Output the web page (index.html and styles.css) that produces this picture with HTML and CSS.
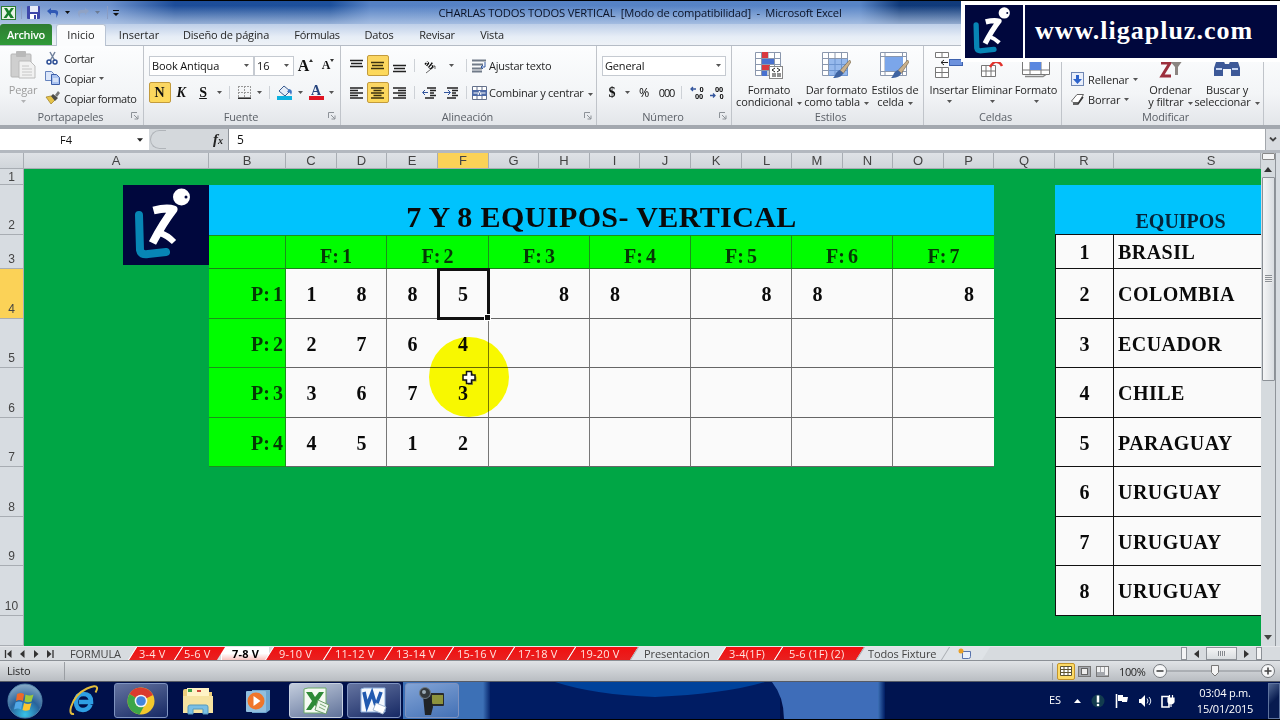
FILE: index.html
```html
<!DOCTYPE html>
<html lang="es">
<head>
    <meta charset="UTF-8">
    <meta name="viewport" content="width=device-width, initial-scale=1.0">
    <title>CHARLAS TODOS TODOS VERTICAL - Microsoft Excel</title>
    <link rel="stylesheet" href="styles.css">
</head>
<body>
    <!-- Shared icons -->
    <svg class="defs" width="0" height="0">
        <symbol id="logo" viewBox="0 0 86 80">
            <rect width="86" height="80" fill="#00073d"/>
            <path d="M16 30 L17 65 Q18 70 25 69 L43 67" fill="none" stroke="#0785b5" stroke-width="8" stroke-linecap="round" stroke-linejoin="round"/>
            <path d="M30.500 25.500 Q44 22 50.500 24.500 Q40 38 29.500 58" fill="none" stroke="#fff" stroke-width="8" stroke-linejoin="round"/>
            <path d="M37 48 Q44 50 51 57" fill="none" stroke="#fff" stroke-width="6"/>
            <circle cx="58.500" cy="12" r="8.500" fill="#fff"/>
            <circle cx="63" cy="12" r="1.500" fill="#00073d"/>
        </symbol>
        <symbol id="drop" viewBox="0 0 5 3"><path d="M0 0h5L2.500 3z" fill="#555"/></symbol>
        <symbol id="launch" viewBox="0 0 8 8"><path d="M.5 6V.5H6M3 3l4 4M7 3.500V7H3.500" fill="none" stroke="#8d9298"/></symbol>
        <symbol id="brush" viewBox="0 0 20 20"><path d="M18.500 0L20 2 12 14 8.500 11z" fill="#c9b08c" stroke="#76664d" stroke-width=".7"/><path d="M8 10.500l4 3.500c-2 4-6 5-11 5 3-2 2-6 7-8.500z" fill="#3f64a2"/></symbol>
        <symbol id="grid9" viewBox="0 0 26 24"><path d="M.5.5h25v23H.5zM6.500 0v24M13 0v24M19.500 0v24M0 6.500h26M0 12.500h26M0 18.500h26" fill="#fff" stroke="#8a97ad"/></symbol>
    </svg>

    <div class="screen">
        <!-- Title bar -->
        <div class="titlebar">
            <div class="quick">
                <svg width="15" height="14" viewBox="0 0 15 14"><rect x=".5" y=".5" width="14" height="13" fill="#e9f4e6" stroke="#2c7c32"/><path d="M3 2h3l2 3 2-3h3L9.500 7l3.500 5h-3.500L7.500 9l-2 3H2.500L6 7z" fill="#187f2b"/></svg>
                <i class="qsep"></i>
                <svg width="13" height="13" viewBox="0 0 13 13"><rect width="13" height="13" rx="1" fill="#3d46aa"/><rect x="3" width="8" height="6" fill="#e8ecfa"/><rect x="3" y="8" width="7" height="5" fill="#fff"/><rect x="7" y="9" width="2" height="4" fill="#3d46aa"/></svg>
                <svg class="undo" width="12" height="12" viewBox="0 0 12 12"><path d="M0 4l4-3v2h4c4 0 4 4 1 8 1-3 0-5-2-5H4v2z" fill="#2f58b5"/></svg>
                <svg class="qd" width="5" height="3" viewBox="0 0 5 3"><path d="M0 0h5L2.500 3z" fill="#111"/></svg>
                <svg width="12" height="12" viewBox="0 0 12 12" opacity=".8"><path d="M12 4L8 1v2H4C0 3 0 7 3 11c-1-3 0-5 2-5h3v2z" fill="#93a3c2"/></svg>
                <svg class="qd" width="5" height="3" opacity=".5"><use href="#drop"/></svg>
                <i class="qsep"></i>
                <svg width="6" height="6" viewBox="0 0 6 6"><path d="M0 0h6v1H0zM0 3h6L3 6z" fill="#111"/></svg>
            </div>
            <div class="doc-title">CHARLAS TODOS TODOS VERTICAL&nbsp; [Modo de compatibilidad]&nbsp; -&nbsp; Microsoft Excel</div>
        </div>

        <!-- Ribbon tabs -->
        <div class="tabs">
            <span class="tab file">Archivo</span>
            <span class="tab current">Inicio</span>
            <span class="tab t-insertar">Insertar</span>
            <span class="tab t-diseno">Diseño de página</span>
            <span class="tab t-formulas">Fórmulas</span>
            <span class="tab t-datos">Datos</span>
            <span class="tab t-revisar">Revisar</span>
            <span class="tab t-vista">Vista</span>
        </div>

        <!-- Ribbon -->
        <div class="ribbon">
            <div class="group g-clip">
                <div class="tools">
                    <div class="big paste">
                        <svg width="26" height="28" viewBox="0 0 26 28"><rect x="1" y="3" width="20" height="23" rx="1" fill="#cfcfcf" stroke="#b5b5b5"/><rect x="6" y="0" width="10" height="6" rx="1" fill="#b9b9b9"/><path d="M9 10h11l5 5v12H9z" fill="#f1f1f1" stroke="#bbb"/><path d="M12 15h7M12 18h10M12 21h10M12 24h10" stroke="#c6c6c6"/></svg>
                        <span>Pegar</span>
                        <svg class="d" width="5" height="3" opacity=".4"><use href="#drop"/></svg>
                    </div>
                    <div class="list">
                        <div><svg width="15" height="14" viewBox="0 0 15 14"><path d="M5 1l5 9M10 1L5 10" stroke="#70819c" stroke-width="1.500"/><circle cx="4" cy="11" r="2" fill="none" stroke="#2b4d94" stroke-width="1.500"/><circle cx="10" cy="11" r="2" fill="none" stroke="#2b4d94" stroke-width="1.500"/></svg><span>Cortar</span></div>
                        <div><svg width="15" height="14" viewBox="0 0 15 14"><path d="M.5.500h6l2 2v7h-8z" fill="#dbe6fa" stroke="#6583be"/><path d="M6.500 3.500h5l3 3v7h-8z" fill="#a9c2f0" stroke="#3c5ea8"/><path d="M8 8h5M8 10h5" stroke="#fff"/></svg><span>Copiar</span><svg class="d" width="5" height="3"><use href="#drop"/></svg></div>
                        <div><svg width="15" height="14" viewBox="0 0 15 14"><path d="M1 6l5-1 4 4-4 4z" fill="#e6c34a" stroke="#9c7e24" stroke-width=".7"/><path d="M6 5l2-2 5 4-3 3z" fill="#4c4b46"/><path d="M10 4l3-4 2 2-3 4z" fill="#777"/></svg><span>Copiar formato</span></div>
                    </div>
                </div>
                <div class="caption"><span>Portapapeles</span><svg width="8" height="8"><use href="#launch"/></svg></div>
            </div>

            <div class="group g-font">
                <div class="row row-name">
                    <div class="combo"><span>Book Antiqua</span><svg width="5" height="3"><use href="#drop"/></svg></div>
                    <div class="combo"><span>16</span><svg width="5" height="3"><use href="#drop"/></svg></div>
                    <b class="grow">A<svg width="4" height="3" viewBox="0 0 4 3"><path d="M0 3h4L2 0z" fill="#333"/></svg></b>
                    <b class="grow small">A<svg width="4" height="3" viewBox="0 0 4 3"><path d="M0 0h4L2 3z" fill="#333"/></svg></b>
                </div>
                <div class="row row-style">
                    <b class="on">N</b><b class="k">K</b><b class="s">S</b>
                    <svg width="5" height="3"><use href="#drop"/></svg><i class="sep"></i>
                    <svg width="13" height="13" viewBox="0 0 13 13"><path d="M.5 0v12M12.500 0v12M6.500 0v12M0 .5h13M0 6.500h13" stroke="#999" stroke-dasharray="2 1"/><path d="M0 12.200h13" stroke="#222" stroke-width="1.500"/></svg>
                    <svg width="5" height="3"><use href="#drop"/></svg><i class="sep"></i>
                    <svg width="16" height="15" viewBox="0 0 16 15"><path d="M2 6l5-5 6 5-5 5z" fill="#e4ecf7" stroke="#3a5b8f"/><path d="M12 4c4 1 3 4 2 6-1-3-2-3-4-3z" fill="#3b74c4"/><rect y="11" width="15" height="4" fill="#0cb2e0"/></svg>
                    <svg width="5" height="3"><use href="#drop"/></svg>
                    <b class="fontcolor">A</b>
                    <svg width="5" height="3"><use href="#drop"/></svg>
                </div>
                <div class="caption"><span>Fuente</span><svg width="8" height="8"><use href="#launch"/></svg></div>
            </div>

            <div class="group g-align">
                <div class="row row-align">
                    <svg width="13" height="15" viewBox="0 0 13 15"><path d="M0 2.500h13M1 5.500h11M0 8.500h13" stroke="#222" stroke-width="1.500"/></svg>
                    <span class="on"><svg width="13" height="15" viewBox="0 0 13 15"><path d="M0 4.500h13M1 7.500h11M0 10.500h13" stroke="#3b3210" stroke-width="1.500"/></svg></span>
                    <svg width="13" height="15" viewBox="0 0 13 15"><path d="M0 7.500h13M1 10.500h11M0 13.500h13" stroke="#222" stroke-width="1.500"/></svg>
                    <i class="sep"></i>
                    <svg class="orient" width="16" height="16" viewBox="0 0 16 16"><path d="M5 15L14 8M11 8h3v3" stroke="#666" fill="none"/><text x="3" y="8" transform="rotate(40 6 7)">ab</text></svg>
                    <svg width="5" height="3"><use href="#drop"/></svg>
                    <i class="sep"></i>
                    <svg width="15" height="14" viewBox="0 0 15 14"><path d="M0 1.500h14M0 5.500h11M0 9.500h10M0 12.500h10" stroke="#707a88" stroke-width="2"/><path d="M13 3v5H9M11 6L9 8l2 2" stroke="#3056a0" fill="none"/></svg>
                    <span class="txt">Ajustar texto</span>
                </div>
                <div class="row row-align">
                    <svg width="13" height="12" viewBox="0 0 13 12"><path d="M0 1h13M0 3.500h8M0 6h13M0 8.500h8M0 11h13" stroke="#222" stroke-width="1.400"/></svg>
                    <span class="on"><svg width="13" height="12" viewBox="0 0 13 12"><path d="M0 1h13M2.500 3.500h8M0 6h13M2.500 8.500h8M0 11h13" stroke="#3b3210" stroke-width="1.400"/></svg></span>
                    <svg width="13" height="12" viewBox="0 0 13 12"><path d="M0 1h13M5 3.500h8M0 6h13M5 8.500h8M0 11h13" stroke="#222" stroke-width="1.400"/></svg>
                    <i class="sep"></i>
                    <svg width="14" height="12" viewBox="0 0 14 12"><path d="M5 1h9M8 3.500h6M8 6h4M8 8.500h6M3 11h9" stroke="#222" stroke-width="1.600"/><path d="M6 5.500H1M3 3L.5 5.500 3 8" stroke="#33559d" fill="none"/></svg>
                    <svg width="14" height="12" viewBox="0 0 14 12"><path d="M3 1h11M8 3.500h6M8 6h4M8 8.500h6M3 11h9" stroke="#222" stroke-width="1.600"/><path d="M0 5.500h6M4 3l2.500 2.500L4 8" stroke="#33559d" fill="none"/></svg>
                    <i class="sep"></i>
                    <svg width="15" height="14" viewBox="0 0 15 14"><path d="M.5.500h14v13H.5zM5 0v4M10 0v4M5 10v4M10 10v4" fill="#fff" stroke="#64718a"/><rect y="4" width="15" height="6" fill="#4d6aa6"/><path d="M1.500 7H6M9 7h4.500" stroke="#fff"/><path d="M6 9l1.500-4L9 9" fill="none" stroke="#fff"/></svg>
                    <span class="txt">Combinar y centrar<svg class="d" width="5" height="3"><use href="#drop"/></svg></span>
                </div>
                <div class="caption"><span>Alineación</span><svg width="8" height="8"><use href="#launch"/></svg></div>
            </div>

            <div class="group g-number">
                <div class="row row-format">
                    <div class="combo"><span>General</span><svg width="5" height="3"><use href="#drop"/></svg></div>
                </div>
                <div class="row row-num">
                    <b>$</b><svg width="5" height="3"><use href="#drop"/></svg><span class="pc">%</span><span class="mil">000</span><i class="sep"></i>
                    <svg width="14" height="13" viewBox="0 0 14 13"><path d="M6 3H1M3 1L1 3l2 2" stroke="#33559d" fill="none" stroke-width="1.300"/><text x="9.500" y="6">0</text><text x="5" y="12.500">00</text></svg>
                    <svg width="14" height="13" viewBox="0 0 14 13"><path d="M0 9.500h5M3 7.500l2 2-2 2" stroke="#33559d" fill="none" stroke-width="1.300"/><text x="5" y="6">00</text><text x="9.500" y="12.500">0</text></svg>
                </div>
                <div class="caption"><span>Número</span><svg width="8" height="8"><use href="#launch"/></svg></div>
            </div>

            <div class="group g-styles">
                <div class="tools">
                    <div class="big">
                        <svg width="28" height="28" viewBox="0 0 28 28"><use href="#grid9" width="26" height="24" y="1"/><rect x="7" y="1" width="6" height="6" fill="#d8393f"/><rect x="7" y="8" width="12" height="5" fill="#4871d0"/><rect x="7" y="14" width="8" height="5" fill="#d8393f"/><rect x="7" y="20" width="5" height="5" fill="#4871d0"/><rect x="14.500" y="15.500" width="13" height="12" fill="#fff" stroke="#888"/><path d="M20 17l-3 2 3 2M17 23h4M17 25h4M22 17l3 2-3 2M22 23h4M22 25h4" fill="none" stroke="#222"/></svg>
                        <span>Formato</span><span>condicional<svg class="d" width="5" height="3"><use href="#drop"/></svg></span>
                    </div>
                    <div class="big">
                        <svg width="30" height="28" viewBox="0 0 30 28"><use href="#grid9" width="26" height="24" y="1"/><path d="M7 8h19v17H7z" fill="#5d94e4" opacity=".65"/><use href="#brush" x="10" y="9" width="19" height="19"/></svg>
                        <span>Dar formato</span><span>como tabla<svg class="d" width="5" height="3"><use href="#drop"/></svg></span>
                    </div>
                    <div class="big">
                        <svg width="30" height="28" viewBox="0 0 30 28"><path d="M.5 1.500h26v23H.5zM5 1v24M22.500 1v24M0 5.500h27M0 20.500h27" fill="#fff" stroke="#8a97ad"/><rect x="5" y="6" width="18" height="14" fill="#7ba6ea"/><use href="#brush" x="10" y="9" width="19" height="19"/></svg>
                        <span>Estilos de</span><span>celda<svg class="d" width="5" height="3"><use href="#drop"/></svg></span>
                    </div>
                </div>
                <div class="caption"><span>Estilos</span></div>
            </div>

            <div class="group g-cells">
                <div class="tools">
                    <div class="big">
                        <svg width="28" height="28" viewBox="0 0 28 28"><path d="M.5 1.500h13v5H.500zM7 1v5M.5 16.500h13v10H.500zM7 16v10M0 21.500h14" fill="#fff" stroke="#777"/><rect x="14.500" y="8.500" width="13" height="6" fill="#6d92dd" stroke="#3e62ae"/><path d="M13 11.500H6M9 9l-3 2.500L9 14" stroke="#222" fill="none"/></svg>
                        <span>Insertar</span><svg class="d" width="5" height="3"><use href="#drop"/></svg>
                    </div>
                    <div class="big">
                        <svg width="28" height="28" viewBox="0 0 28 28"><path d="M3.500 14.500h14v11h-14zM8 14v12M13 14v12M3 20h15" fill="#fff" stroke="#777"/><path d="M12 16q4-6 7-5 3 0 5 4" stroke="#e0322c" stroke-width="2.500" fill="none"/></svg>
                        <span>Eliminar</span><svg class="d" width="5" height="3"><use href="#drop"/></svg>
                    </div>
                    <div class="big">
                        <svg width="28" height="28" viewBox="0 0 28 28"><path d="M.5 8.500h27v15H.5zM8 8v16M19 8v16M0 19h28" fill="#fff" stroke="#777"/><rect x="8" y="10" width="11" height="9" fill="#5b88e0"/><path d="M3 25.500h18l3-2" stroke="#888" stroke-width="1.500" fill="none"/></svg>
                        <span>Formato</span><svg class="d" width="5" height="3"><use href="#drop"/></svg>
                    </div>
                </div>
                <div class="caption"><span>Celdas</span></div>
            </div>

            <div class="group g-edit">
                <div class="tools">
                    <div class="list">
                        <div><svg width="13" height="14" viewBox="0 0 13 14"><rect x=".5" y=".5" width="12" height="13" fill="#e9effb" stroke="#6f87b4"/><path d="M5 3h3v4h3l-4.500 5L2 7h3z" fill="#2d63cb"/></svg><span>Rellenar</span><svg class="d" width="5" height="3"><use href="#drop"/></svg></div>
                        <div><svg width="13" height="12" viewBox="0 0 13 12"><path d="M.5 8L6 1.500h6.500L7.500 9.500H2z" fill="#fff" stroke="#666"/><path d="M2 11h5l5-7" stroke="#333" fill="none" stroke-width="1.400"/></svg><span>Borrar</span><svg class="d" width="5" height="3"><use href="#drop"/></svg></div>
                    </div>
                    <div class="big sort">
                        <svg width="28" height="28" viewBox="0 0 28 28"><path d="M4 12h9L5 25h9" stroke="#9c2f3d" stroke-width="3" fill="none"/><path d="M12 9h14l-5 7v8h-3v-8z" fill="#8b8581"/></svg>
                        <span>Ordenar</span><span>y filtrar<svg class="d" width="5" height="3"><use href="#drop"/></svg></span>
                    </div>
                    <div class="big find">
                        <svg width="28" height="28" viewBox="0 0 28 28"><path d="M4 8h6l2 5h4l2-5h6l3 9v8h-9v-7h-8v7H1v-8z" fill="#3d5998"/><path d="M3 18h6M19 18h6" stroke="#c6d5f3" stroke-width="2"/></svg>
                        <span>Buscar y</span><span>seleccionar<svg class="d" width="5" height="3"><use href="#drop"/></svg></span>
                    </div>
                </div>
                <div class="caption"><span>Modificar</span></div>
            </div>
        </div>

        <!-- Formula bar -->
        <div class="formula">
            <div class="namebox"><span>F4</span><svg width="6" height="4" viewBox="0 0 5 3"><path d="M0 0h5L2.500 3z" fill="#222"/></svg></div>
            <div class="fx"><i></i><em>f<small>x</small></em></div>
            <div class="value">5</div>
            <div class="expand"><svg width="8" height="5" viewBox="0 0 8 5"><path d="M1 .5l3 3 3-3" fill="none" stroke="#444" stroke-width="1.800"/></svg></div>
        </div>

        <!-- Worksheet -->
        <div class="work">
            <table class="sheet">
                <colgroup>
                    <col class="w24"><col class="w185"><col class="w77">
                    <col class="w51"><col class="w50"><col class="w51"><col class="w51"><col class="w50"><col class="w51"><col class="w50">
                    <col class="w51"><col class="w51"><col class="w50"><col class="w51"><col class="w50"><col class="w51"><col class="w50">
                    <col class="w61"><col class="w59"><col class="w147">
                </colgroup>
                <tr class="cols"><th class="corner"></th><th>A</th><th>B</th><th>C</th><th>D</th><th>E</th><th class="sel">F</th><th>G</th><th>H</th><th>I</th><th>J</th><th>K</th><th>L</th><th>M</th><th>N</th><th>O</th><th>P</th><th>Q</th><th>R</th><th class="last">S</th></tr>
                <tr class="h16"><th class="first">1</th><td colspan="19"></td></tr>
                <tr class="h50"><th>2</th><td class="brand" rowspan="2"><svg width="86" height="80"><use href="#logo"/></svg></td><td class="title" colspan="15">7 Y 8 EQUIPOS- VERTICAL</td><td></td><td class="team-head"></td><td class="team-head eq">EQUIPOS</td></tr>
                <tr class="h34"><th>3</th><td class="lime"></td><td class="lime" colspan="2">F: 1</td><td class="lime" colspan="2">F: 2</td><td class="lime" colspan="2">F: 3</td><td class="lime" colspan="2">F: 4</td><td class="lime" colspan="2">F: 5</td><td class="lime" colspan="2">F: 6</td><td class="lime end" colspan="2">F: 7</td><td></td><td class="no">1</td><td class="team">BRASIL</td></tr>
                <tr class="h50"><th class="sel">4</th><td></td><td class="match">P: 1</td><td class="l">1</td><td class="r">8</td><td class="l">8</td><td class="r active">5</td><td class="l"></td><td class="r">8</td><td class="l">8</td><td class="r"></td><td class="l"></td><td class="r">8</td><td class="l">8</td><td class="r"></td><td class="l"></td><td class="r end">8</td><td></td><td class="no">2</td><td class="team">COLOMBIA</td></tr>
                <tr class="h49"><th>5</th><td></td><td class="match">P: 2</td><td class="l">2</td><td class="r">7</td><td class="l">6</td><td class="r">4</td><td class="l"></td><td class="r"></td><td class="l"></td><td class="r"></td><td class="l"></td><td class="r"></td><td class="l"></td><td class="r"></td><td class="l"></td><td class="r end"></td><td></td><td class="no">3</td><td class="team">ECUADOR</td></tr>
                <tr class="h50"><th>6</th><td></td><td class="match">P: 3</td><td class="l">3</td><td class="r">6</td><td class="l">7</td><td class="r">3</td><td class="l"></td><td class="r"></td><td class="l"></td><td class="r"></td><td class="l"></td><td class="r"></td><td class="l"></td><td class="r"></td><td class="l"></td><td class="r end"></td><td></td><td class="no">4</td><td class="team">CHILE</td></tr>
                <tr class="h49"><th>7</th><td></td><td class="match">P: 4</td><td class="l">4</td><td class="r">5</td><td class="l">1</td><td class="r">2</td><td class="l"></td><td class="r"></td><td class="l"></td><td class="r"></td><td class="l"></td><td class="r"></td><td class="l"></td><td class="r"></td><td class="l"></td><td class="r end"></td><td></td><td class="no">5</td><td class="team">PARAGUAY</td></tr>
                <tr class="h50"><th>8</th><td colspan="17"></td><td class="no">6</td><td class="team">URUGUAY</td></tr>
                <tr class="h49"><th>9</th><td colspan="17"></td><td class="no">7</td><td class="team">URUGUAY</td></tr>
                <tr class="h50"><th>10</th><td colspan="17"></td><td class="no">8</td><td class="team">URUGUAY</td></tr>
                <tr class="h30"><th></th><td colspan="19"></td></tr>
            </table>
            <div class="vscroll">
                <i class="split"></i>
                <svg class="up" width="8" height="5" viewBox="0 0 8 5"><path d="M0 5h8L4 0z" fill="#333"/></svg>
                <div class="thumb"><i></i></div>
                <svg class="down" width="8" height="5" viewBox="0 0 8 5"><path d="M0 0h8L4 5z" fill="#444"/></svg>
            </div>
            <div class="spot"></div>
            <svg class="cursor" width="18" height="18" viewBox="0 0 18 18"><path d="M6 3h5v3.500h3.500v5H11V15H6v-3.500H2.500v-5H6z" transform="translate(1 1)" fill="#555" opacity=".6"/><path d="M5.500 2.500h5v3.500H14v5h-3.500v3.500h-5V11H2V6h3.500z" fill="#fff" stroke="#111" stroke-width="1.500"/></svg>
        </div>

        <!-- Sheet tabs -->
        <div class="sheets">
            <div class="nav">
                <svg width="58" height="8" viewBox="0 0 58 8"><path d="M5.500 0v8M53 0v8" stroke="#333" stroke-width="1.300"/><path d="M11.500 0v8L7 4zM24.500 0v8L20 4zM34 0v8l4.500-4zM47 0v8l4.500-4z" fill="#333"/></svg>
            </div>
            <span class="st plain s73 first"><b>FORMULA</b></span>
            <span class="st s46"><b>3-4 V</b></span>
            <span class="st s43"><b>5-6 V</b></span>
            <span class="st now s48"><b>7-8 V</b></span>
            <span class="st s58"><b>9-10 V</b></span>
            <span class="st s61"><b>11-12 V</b></span>
            <span class="st s61"><b>13-14 V</b></span>
            <span class="st s61"><b>15-16 V</b></span>
            <span class="st s61"><b>17-18 V</b></span>
            <span class="st s63"><b>19-20 V</b></span>
            <span class="st plain s87"><b>Presentacion</b></span>
            <span class="st s57"><b>3-4(1F)</b></span>
            <span class="st s82"><b>5-6 (1F) (2)</b></span>
            <span class="st plain s85"><b>Todos Fixture</b></span>
            <span class="st plain s41"><svg width="14" height="11" viewBox="0 0 14 11"><path d="M4.500 3.500h8v5q0 2-2 2h-6z" fill="#eaf0fb" stroke="#5873ac"/><circle cx="3" cy="3" r="2.500" fill="#e99f25"/></svg></span>
            <div class="hscroll">
                <i class="grip"></i>
                <svg width="5" height="8" viewBox="0 0 5 8"><path d="M5 0v8L0 4z" fill="#333"/></svg>
                <div class="hthumb"><i></i></div>
                <svg width="5" height="8" viewBox="0 0 5 8"><path d="M0 0v8l5-4z" fill="#333"/></svg>
                <i class="grip"></i>
            </div>
        </div>

        <!-- Status bar -->
        <div class="status">
            <span class="ready">Listo</span>
            <div class="views">
                <span class="view sel"><svg width="12" height="10" viewBox="0 0 12 10"><path d="M.5.500h11v9H.5zM4 0v10M8 0v10M0 3.500h12M0 6.500h12" fill="#fff" stroke="#5f5430"/></svg></span>
                <span class="view"><svg width="13" height="11" viewBox="0 0 13 11"><rect x=".5" y=".5" width="12" height="10" fill="#a5a8ad" stroke="#777"/><rect x="3.500" y="2.500" width="6" height="6" fill="#eee" stroke="#666"/></svg></span>
                <span class="view"><svg width="13" height="11" viewBox="0 0 13 11"><rect x=".5" y=".5" width="12" height="10" fill="#a5a8ad" stroke="#777"/><path d="M1 1h3v5H1zM5 1h3v5H5zM9 1h3v8H9z" fill="#f2f2f2"/></svg></span>
            </div>
            <span class="pct">100%</span>
            <svg class="zoom" width="126" height="16" viewBox="0 0 126 16"><path d="M16 8h94" stroke="#898d93"/><circle cx="9" cy="8" r="6.500" fill="#f6f7f8" stroke="#73777c"/><path d="M5.500 8h7" stroke="#444" stroke-width="1.600"/><path d="M60.500 2.500h7v7L64 13l-3.500-3.500z" fill="#f4f4f4" stroke="#777"/><circle cx="117" cy="8" r="6.500" fill="#f6f7f8" stroke="#73777c"/><path d="M113.500 8h7M117 4.500v7" stroke="#444" stroke-width="1.600"/></svg>
        </div>

        <!-- Taskbar -->
        <div class="taskbar">
            <svg class="wall" width="1280" height="37" viewBox="0 0 1280 37" preserveAspectRatio="none">
                <defs>
                    <linearGradient id="edge"><stop offset="0" stop-color="#3c70b6"/><stop offset="1" stop-color="#001c63"/></linearGradient>
                </defs>
                <rect width="1280" height="37" fill="#00104a"/>
                <rect x="403" width="84" height="37" fill="#3c70b6"/>
                <rect x="483" width="8" height="37" fill="url(#edge)"/>
                <rect x="490" width="290" height="37" fill="#001c63"/>
                <path d="M555 0h210q-40 12-110 15-60-2-100-15z" fill="#00429b"/>
                <path d="M772 0h110v37H784q0-22-12-37z" fill="#3e6db9"/>
                <rect x="878" width="7" height="37" fill="url(#edge)"/>
                <rect x="885" width="395" height="37" fill="#001450"/>
            </svg>
            <div class="apps">
                <span class="app orb"><svg width="36" height="36" viewBox="0 0 36 36">
                    <defs><radialGradient id="orb" cx=".5" cy=".9" r=".9"><stop offset="0" stop-color="#37c2e8"/><stop offset=".5" stop-color="#28629b"/><stop offset="1" stop-color="#8badc8"/></radialGradient></defs>
                    <circle cx="18" cy="18" r="17" fill="url(#orb)" stroke="#4f82a8"/>
                    <path d="M10 11q4-2 7 0l-1 7q-4-2-7 0z" fill="#ee6a29"/><path d="M18.500 11.500q4 2 8 0l-2 7q-3 1.500-7 0z" fill="#9cc93c"/><path d="M8.500 19.500q4-2 7 0l-1.500 7q-3-2-7 0z" fill="#52a8e8"/><path d="M17 20q4 2 7.500 0l-2 7q-4 1.500-7 0z" fill="#fbc62f"/>
                </svg></span>
                <span class="app ie"><svg width="32" height="32" viewBox="0 0 32 32"><path d="M22.500 19.500q-2 5.500-7.500 5.500-7 0-7-8t7.500-8q7.500 0 7.500 8H11" fill="none" stroke="#2e9fe4" stroke-width="4.500"/><path d="M6 29q-5 1-3-7Q7 9 19 3.500q9-4 10-1 .5 2-1.500 5" fill="none" stroke="#e3bd3c" stroke-width="2"/></svg></span>
                <span class="app chrome boxed"><svg width="28" height="28" viewBox="0 0 28 28"><circle cx="14" cy="14" r="13.500" fill="#f3c82d"/><path d="M14 14L2.500 7A13.500 13.500 0 0 1 26 8z" fill="#da3b2f"/><path d="M14 14L2.500 7A13.500 13.500 0 0 0 12.500 27.400l5.500-10z" fill="#3da648"/><circle cx="14" cy="14" r="6.300" fill="#f5f5f5"/><circle cx="14" cy="14" r="4.800" fill="#4485dc"/></svg></span>
                <span class="app folder"><svg width="32" height="28" viewBox="0 0 32 28"><path d="M1 4q0-2 2-2h7l2 3h18v21H1z" fill="#edcf7d"/><path d="M5 1h22v8H5z" fill="#fff3c6"/><path d="M6 2h4v3H6z" fill="#3da048"/><path d="M15 3h4v2h-4z" fill="#d04b3a"/><path d="M1 9h30v17H1z" fill="#f6e3a1"/><path d="M6 27v-7q0-2 2-2h16q2 0 2 2v7h-5v-5H11v5z" fill="#79bfe5" stroke="#5499bd"/></svg></span>
                <span class="app media"><svg width="26" height="26" viewBox="0 0 26 26"><path d="M7 2h18v20l-4 3H7z" fill="#6da5d0"/><rect x="1" y="3" width="20" height="21" rx="1" fill="#91bfdf"/><circle cx="11" cy="13" r="8.500" fill="#ef762b"/><path d="M8.500 8l7 5-7 5z" fill="#fff"/></svg></span>
                <span class="app boxed excel"><svg width="30" height="28" viewBox="0 0 30 28"><path d="M3 2l4-1h18v25H3z" fill="#f5faf3" stroke="#6cac69"/><path d="M5 5h6l3 5 4-5h5l-6 9 6 9h-6l-3-5-4 5H5l6-9z" fill="#2e8a37"/><path d="M17 13l11 5-3 9-11-4z" fill="#eef6ec" stroke="#6b9c69"/><path d="M19 17l6 3M18 20l6 3" stroke="#79a877"/></svg></span>
                <span class="app boxed word"><svg width="30" height="28" viewBox="0 0 30 28"><path d="M2 2l3-1h21v24H2z" fill="#f5f8fd" stroke="#90b2df"/><path d="M5 5l3 14 5-13 4 13 5-14" fill="none" stroke="#2059af" stroke-width="3.600"/><path d="M17 16l10 4-3 7-10-4z" fill="#fff" stroke="#a3b7d2"/></svg></span>
                <span class="app boxed cam"><svg width="28" height="32" viewBox="0 0 28 32"><rect x="12" y="8" width="14" height="13" rx="1" fill="#292b2b"/><rect x="14" y="10" width="11" height="9" fill="#8d933d"/><path d="M5 10l8 2 2 10-2 8H7l-1-9z" fill="#202326"/><circle cx="7" cy="8" r="5.500" fill="#33383c" stroke="#6e7981"/><circle cx="6" cy="7" r="2" fill="#9baab5"/></svg></span>
            </div>
            <div class="tray">
                <span class="lang">ES</span>
                <svg width="7" height="4" viewBox="0 0 7 4"><path d="M0 4h7L3.500 0z" fill="#fff"/></svg>
                <svg width="16" height="16" viewBox="0 0 16 16"><circle cx="8" cy="8" r="6.500" fill="#123b4e"/><path d="M8 2.500v7" stroke="#fff" stroke-width="2.500"/><circle cx="8" cy="12" r="1.300" fill="#fff"/></svg>
                <svg width="14" height="14" viewBox="0 0 14 14"><path d="M1.500 0v14" stroke="#fff" stroke-width="1.600"/><path d="M3 1h5v2h5l-1 5H7V7H3z" fill="#fff"/></svg>
                <svg width="14" height="14" viewBox="0 0 14 14"><path d="M1 5h2l4-4v12L3 9H1z" fill="#fff"/><path d="M9 4.500q2 2.500 0 5M11 3q3.500 4 0 8" fill="none" stroke="#dfe7f2"/></svg>
                <svg width="14" height="14" viewBox="0 0 14 14"><path d="M1 2.500h7v10.500H1z" fill="none" stroke="#fff" stroke-width="1.600"/><path d="M7 4h6v4q-1 2-3 2T7 8zM8.500 4V1M11.500 4V1M10 9v4" fill="#fff" stroke="#fff" stroke-width="1.200"/></svg>
                <div class="clock">03:04 p.m.<br>15/01/2015</div>
                <i class="peek"></i>
            </div>
        </div>
    </div>

    <!-- Site banner -->
    <div class="banner">
        <svg width="58" height="53" viewBox="0 0 58 53"><rect width="58" height="53" fill="#00073d"/><use href="#logo" width="58" height="53"/></svg>
        <div class="url">www.ligapluz.com</div>
    </div>
</body>
</html>
```

FILE: styles.css
```css
* {
    box-sizing: border-box;
}

body {
    margin: 0;
    background: #000;
    font-family: "Open Sans", "Noto Sans", sans-serif;
    font-size: 11px;
    color: #262626;
    overflow: hidden;
}

svg {
    display: block;
    flex: none;
}

.defs {
    position: absolute;
}

.screen {
    width: 1280px;
    height: 720px;
    display: flex;
    flex-direction: column;
    border-top: 1px solid #000;
    border-bottom: 1px solid #000;
    white-space: nowrap;
}

/* Title bar */
.titlebar {
    height: 23px;
    display: flex;
    align-items: center;
    background: linear-gradient(180deg, rgba(255, 255, 255, 0) 20%, rgba(190, 208, 234, 0.75)), linear-gradient(90deg, #7e9cd0 0, #6b90cc 110px, #1c4c98 175px, #1d509c 330px, #5581c4 370px, #5784c6 860px, #0f3979 900px, #164486 1280px);
}

.quick {
    display: flex;
    align-items: center;
    width: 130px;
    padding-left: 1px;
    gap: 5px;
}

.quick .undo {
    margin-left: 2px;
}

.quick .qd {
    margin: 0 2px 0 1px;
}

.qsep {
    width: 1px;
    height: 13px;
    background: #8a9dc3;
}

.doc-title {
    width: 1020px;
    text-align: center;
    color: #0a1226;
    font-size: 11.2px;
    letter-spacing: -0.17px;
}

/* Ribbon tabs */
.tabs {
    height: 22px;
    display: flex;
    align-items: stretch;
    background: linear-gradient(180deg, #bdcee8, #e6edf6 60%, #eef2f7);
    border-bottom: 1px solid #b5bcc6;
}

.tab {
    text-align: center;
    line-height: 21px;
}

.tab.file {
    width: 52px;
    background: linear-gradient(180deg, #2f7c31, #2f9a38);
    border-radius: 3px 3px 0 0;
    color: #fff;
    font-weight: 600;
    letter-spacing: -0.3px;
}

.tab.current {
    width: 50px;
    margin: 0 0 -1px 4px;
    background: #fbfcfd;
    border: 1px solid #b8c3d3;
    border-bottom: 0;
    border-radius: 3px 3px 0 0;
    line-height: 20px;
}

.t-insertar { width: 66px; }
.t-diseno { width: 108px; letter-spacing: -0.15px; }
.t-formulas { width: 74px; letter-spacing: -0.3px; }
.t-datos { width: 50px; letter-spacing: -0.2px; }
.t-revisar { width: 66px; letter-spacing: -0.2px; }
.t-vista { width: 44px; letter-spacing: -0.2px; }

/* Ribbon */
.ribbon {
    height: 79px;
    display: flex;
    background: linear-gradient(180deg, #fcfdfe, #f3f5f7 60%, #e3e6ea);
}

.group {
    position: relative;
    display: flex;
    flex-direction: column;
    border-right: 1px solid #c0c4ca;
    padding-top: 2px;
    letter-spacing: -0.15px;
}

.g-clip { width: 144px; }
.g-font { width: 197px; }
.g-align { width: 256px; }
.g-number { width: 135px; }
.g-styles { width: 192px; }
.g-cells { width: 138px; }
.g-edit { width: 202px; }

.caption {
    margin-top: auto;
    height: 16px;
    line-height: 15px;
    text-align: center;
    color: #5c6168;
    display: flex;
    align-items: center;
    padding: 0 4px 0 10px;
    margin-bottom: 1px;
}

.caption span {
    flex: 1;
}

.tools {
    display: flex;
}

.list {
    display: flex;
    flex-direction: column;
}

.list div {
    height: 20px;
    display: flex;
    align-items: center;
    gap: 4px;
}

.g-clip .tools {
    height: 60px;
    padding-left: 7px;
}

.g-clip .list {
    padding-left: 6px;
    letter-spacing: -0.4px;
}

.big {
    display: flex;
    flex-direction: column;
    align-items: center;
    text-align: center;
    line-height: 12px;
    padding-top: 3px;
}

.big > span {
    height: 12px;
}

.big > svg + span {
    margin-top: 5px;
}

.big > .d {
    margin-top: 4px;
}

.big span .d, .txt .d {
    display: inline-block;
    vertical-align: middle;
    margin-left: 4px;
}

.paste {
    width: 32px;
    color: #9c9c9c;
}

.row {
    height: 21px;
    display: grid;
    align-items: center;
    justify-items: center;
}

.row + .row {
    margin-top: 6px;
}

.g-font, .g-align, .g-number {
    padding-top: 9px;
}

.g-font .row {
    margin-left: 5px;
}

.row-name {
    grid-template-columns: 105px 40px 23px 22px;
    justify-content: start;
}

.row-style {
    grid-template-columns: 21px 22px 22px 10px 10px 20px 10px 10px 22px 9px 22px 9px;
    justify-content: start;
}

.combo {
    width: 100%;
    height: 20px;
    background: #fff;
    border: 1px solid #c5cad1;
    display: flex;
    align-items: center;
    justify-content: space-between;
    padding: 0 4px 0 2px;
    color: #111;
}

.row b {
    font-family: "Liberation Serif", serif;
    font-size: 14px;
    color: #111;
    line-height: 19px;
}

.row .grow {
    display: flex;
    font-size: 16px;
}

.row .grow svg {
    margin-top: 3px;
}

.row .grow.small {
    font-size: 12px;
}

.on {
    width: 22px;
    height: 21px;
    background: linear-gradient(180deg, #fbd663, #fdd95a);
    border: 1px solid #c39b3c;
    border-radius: 2px;
    display: flex;
    align-items: center;
    justify-content: center;
    text-align: center;
}

.row .k {
    font-style: italic;
}

.row .s {
    text-decoration: underline;
}

.row .fontcolor {
    width: 15px;
    height: 15px;
    line-height: 12px;
    text-align: center;
    border-bottom: 4px solid #e01522;
    color: #27457e;
}

.sep {
    width: 1px;
    height: 13px;
    background: #cdd1d6;
}

.row-align {
    grid-template-columns: 22px 21px 22px 8px 22px 22px 8px 19px auto;
    justify-content: start;
    margin-left: 4px;
}

.row-align .txt {
    justify-self: start;
    letter-spacing: -0.25px;
}

.orient text {
    font: bold 9px "Liberation Serif", serif;
}

.row-format {
    padding: 0 5px 0 5px;
}

.row-num {
    grid-template-columns: 22px 8px 26px 19px 10px 21px 20px;
    justify-content: start;
    margin-left: 4px;
    color: #111;
}

.row-num text {
    font: bold 7.5px "Liberation Sans", sans-serif;
}

.row-num .pc {
    font-size: 12.5px;
}

.mil {
    letter-spacing: -1.2px;
}

.g-styles .tools {
    padding-left: 4px;
    display: grid;
    grid-template-columns: 66px 69px 48px;
}

.g-cells .tools {
    padding-left: 3px;
    display: grid;
    grid-template-columns: 44px 42px 46px;
}

.g-edit .list {
    width: 76px;
    padding: 21px 0 0 9px;
}

.g-edit .sort {
    width: 65px;
}

.g-edit .find {
    width: 48px;
}

/* Formula bar */
.formula {
    height: 28px;
    display: flex;
    border-top: 4px solid #a3a8af;
    border-bottom: 3px solid #b3b8bf;
    background: #d4d8dc;
    color: #111;
    font-size: 11px;
    line-height: 21px;
}

.namebox {
    width: 149px;
    background: #fff;
    display: flex;
    align-items: center;
}

.namebox span {
    width: 137px;
    padding-left: 60px;
}

.fx {
    width: 80px;
    display: flex;
    align-items: center;
    justify-content: space-between;
    border-right: 1px solid #8f949a;
    padding-right: 5px;
}

.fx i {
    width: 16px;
    height: 19px;
    border: 1px solid #b0b4b9;
    border-right: 0;
    border-radius: 10px 0 0 10px;
    margin-left: 1px;
}

.fx em {
    font: italic bold 15px "Liberation Serif", serif;
    color: #222;
}

.fx small {
    font-size: 10px;
}

.value {
    flex: 1;
    background: #fff;
    padding-left: 8px;
    font-size: 12px;
}

.expand {
    width: 15px;
    display: flex;
    align-items: center;
    justify-content: center;
    background: #d9dce0;
    border-left: 1px solid #a3a7ac;
}

/* Worksheet */
.work {
    position: relative;
    display: flex;
    height: 493px;
    background: #d7dce1;
    overflow: hidden;
}

.sheet {
    width: 1261px;
    table-layout: fixed;
    border-collapse: separate;
    border-spacing: 0;
    background: #00a645;
    font-family: "Liberation Serif", serif;
    font-size: 20px;
    font-weight: bold;
    color: #0a0a0a;
}

.w24 { width: 24px; }
.w50 { width: 50px; }
.w51 { width: 51px; }
.w59 { width: 59px; }
.w61 { width: 61px; }
.w77 { width: 77px; }
.w147 { width: 147px; }
.w185 { width: 185px; }

.cols { height: 16px; }
.h16 { height: 16px; }
.h30 { height: 30px; }
.h34 { height: 34px; }
.h49 { height: 49px; }
.h50 { height: 50px; }

.sheet td, .sheet th {
    padding: 0;
    line-height: 1;
}

.sheet th {
    font: 12px/14px "Liberation Sans", sans-serif;
    color: #444;
    background: #d7dce1;
    border-right: 1px solid #a8adb3;
    border-bottom: 1px solid #a8adb3;
    vertical-align: bottom;
    padding-bottom: 2px;
}

.sheet th.first {
    line-height: 13px;
}

.sheet .cols th, .sheet th.first {
    padding-bottom: 0;
}

.sheet .cols th {
    line-height: 15px;
    font-size: 13px;
    background: linear-gradient(180deg, #dfe2e6, #d0d5da);
}

.sheet .cols .last {
    padding-left: 48px;
}

.sheet th.sel, .sheet .cols th.sel {
    background: #fbd257;
}

.sheet .brand {
    text-align: right;
    vertical-align: top;
}

.brand svg {
    margin-left: auto;
}

.sheet .title {
    background: #00c3fd;
    font-size: 30px;
    letter-spacing: 0.4px;
    text-align: center;
    vertical-align: bottom;
    padding-bottom: 3px;
}

.team-head {
    background: #00c3fd;
    border-bottom: 1px solid #111;
}

.sheet .eq {
    text-align: center;
    vertical-align: bottom;
    padding: 0 14px 3px 0;
    color: #05243a;
}

.sheet .lime {
    background: #00fd00;
    text-align: center;
    vertical-align: bottom;
    padding-bottom: 2px;
    border-right: 1px solid #1c8f1c;
    border-top: 1px solid #1c8f1c;
    border-bottom: 1px solid #1c7f1c;
    color: #063806;
    word-spacing: -2px;
}

.sheet .match {
    background: #00fd00;
    text-align: right;
    padding: 1px 2px 0 0;
    border-right: 1px solid #1c8f1c;
    border-bottom: 1px solid #1c8f1c;
    color: #063806;
    word-spacing: -2px;
}

.l, .r {
    background: #fafafa;
    text-align: center;
    border-bottom: 1px solid #666;
}

.sheet .l, .sheet .r {
    padding-top: 1px;
}

.r {
    border-right: 1px solid #777;
}

.sheet .end {
    border-right: 0;
}

.sheet .active {
    outline: 3px solid #111;
    outline-offset: -2px;
    position: relative;
}

.active::after {
    content: "";
    position: absolute;
    right: -3px;
    bottom: -3px;
    width: 5px;
    height: 5px;
    background: #111;
    border: 1px solid #fff;
}

.no, .team {
    background: #fafafa;
    border-bottom: 1px solid #111;
}

.sheet .no {
    text-align: center;
    border-left: 1px solid #111;
    border-right: 1px solid #111;
    padding-top: 1px;
}

.sheet .team {
    padding: 1px 0 0 4px;
    letter-spacing: 0.45px;
}

.vscroll {
    width: 15px;
    height: 493px;
    display: flex;
    flex-direction: column;
    align-items: center;
    border-right: 1px solid #8f949a;
    background: #d5dade;
}

.split {
    width: 13px;
    height: 7px;
    border: 1px solid #888;
    border-radius: 1px;
    background: #f4f5f6;
}

.up {
    margin: 7px 0 5px;
}

.thumb {
    width: 13px;
    height: 204px;
    background: linear-gradient(90deg, #f4f5f6, #d9dde1);
    border: 1px solid #8c9197;
    border-radius: 1px;
    display: flex;
    align-items: center;
    justify-content: center;
}

.thumb i {
    width: 7px;
    height: 8px;
    background: repeating-linear-gradient(180deg, #8b9096 0 1px, #eee 1px 2px);
}

.down {
    margin: auto 0 6px;
}

.spot {
    position: absolute;
    left: 429px;
    top: 184px;
    width: 80px;
    height: 80px;
    border-radius: 50%;
    background: #fdfd00;
    mix-blend-mode: multiply;
}

.cursor {
    position: absolute;
    left: 461px;
    top: 216px;
}

/* Sheet tabs */
.sheets {
    height: 15px;
    display: flex;
    align-items: stretch;
    background: #d7dbdf;
    border-bottom: 1px solid #8b9096;
    border-top: 1px solid #e5e7ea;
    font-size: 11px;
}

.nav {
    width: 59px;
    display: flex;
    align-items: center;
}

.st {
    height: 13px;
    display: flex;
    align-items: center;
    justify-content: center;
    padding-right: 6px;
    background: linear-gradient(180deg, #f01010, #e82020);
    border-left: 1px solid #fff;
    color: #ffe3df;
    transform: skewX(-32deg);
    letter-spacing: 0.2px;
}

.st > * {
    font-weight: normal;
    line-height: 13px;
    transform: skewX(32deg);
}

.st.plain {
    background: #dfe3e7;
    color: #444;
    border-left-color: #a9adb2;
    letter-spacing: -0.1px;
    padding-right: 2px;
}

.st.first {
    border-left: 0;
    background: none;
    padding-right: 0;
}

.st.now {
    background: linear-gradient(180deg, #fff, #fff 50%, #f9c3bf);
    color: #000;
    padding-right: 0;
    transform: none;
}

.st.now b {
    font-weight: bold;
    transform: none;
}

.s41 { width: 41px; }
.s43 { width: 43px; }
.s46 { width: 46px; }
.s48 { width: 48px; }
.s57 { width: 57px; }
.s58 { width: 58px; }
.s61 { width: 61px; }
.s63 { width: 63px; }
.s73 { width: 73px; }
.s82 { width: 82px; }
.s85 { width: 85px; }
.s87 { width: 87px; }

.hscroll {
    margin-left: auto;
    margin-right: 18px;
    display: flex;
    align-items: center;
    gap: 7px;
}

.grip {
    width: 6px;
    height: 13px;
    background: #f3f4f5;
    border: 1px solid #8c9197;
}

.hthumb {
    width: 31px;
    height: 13px;
    background: linear-gradient(180deg, #f3f4f5, #d9dde0);
    border: 1px solid #8c9197;
    display: flex;
    align-items: center;
    justify-content: center;
}

.hthumb i {
    width: 8px;
    height: 5px;
    background: repeating-linear-gradient(90deg, #84898f 0 1px, #eee 1px 2px);
}

/* Status bar */
.status {
    height: 21px;
    display: flex;
    align-items: center;
    background: linear-gradient(180deg, #e0e3e6, #b9bdc2);
    border-bottom: 1px solid #565b66;
}

.ready {
    width: 65px;
    line-height: 18px;
    padding-left: 7px;
    border-right: 1px solid #9a9ea3;
    letter-spacing: -0.2px;
}

.views {
    margin-left: auto;
    display: flex;
    border-left: 1px solid #9a9ea3;
    padding-left: 4px;
}

.view {
    width: 18px;
    height: 17px;
    display: flex;
    align-items: center;
    justify-content: center;
}

.view.sel {
    background: #fddb66;
    border: 1px solid #c2942b;
    border-radius: 2px;
}

.pct {
    width: 40px;
    padding-left: 8px;
    letter-spacing: -0.4px;
}

.zoom {
    margin-right: 3px;
}

/* Taskbar */
.taskbar {
    position: relative;
    height: 37px;
    display: flex;
    justify-content: space-between;
    overflow: hidden;
}

.wall {
    position: absolute;
    left: 0;
    top: 0;
}

.apps, .tray {
    position: relative;
    display: flex;
    align-items: center;
}

.app {
    height: 35px;
    display: flex;
    align-items: center;
    justify-content: center;
}

.orb { width: 50px; }
.ie { width: 64px; padding-left: 4px; }
.folder { width: 60px; }
.media { width: 59px; margin-right: 2px; }

.boxed {
    width: 54px;
    border: 1px solid #7f93c0;
    border-radius: 3px;
    background: linear-gradient(160deg, rgba(200, 215, 245, 0.5), rgba(90, 115, 180, 0.25));
}

.boxed.excel {
    margin-right: 4px;
    background: linear-gradient(160deg, #c3cddd, #60729a);
    border-color: #c7d1e1;
}

.boxed.word {
    margin-right: 4px;
}

.tray {
    color: #fff;
}

.lang {
    width: 25px;
    margin-top: -3px;
}

.tray svg {
    margin-right: 9px;
}

.clock {
    width: 82px;
    margin-right: 2px;
    text-align: center;
    line-height: 16px;
    letter-spacing: -0.2px;
}

.peek {
    width: 12px;
    height: 36px;
    border: 1px solid #5e739e;
    background: linear-gradient(135deg, #526893, #081b50 50%);
}

/* Site banner */
.banner {
    position: absolute;
    left: 961px;
    top: 1px;
    width: 319px;
    height: 61px;
    display: flex;
    gap: 2px;
    padding: 4px 3px 4px 4px;
    background: #fff;
}

.url {
    flex: 1;
    background: #00073d;
    color: #fff;
    font-family: "Liberation Serif", serif;
    font-weight: bold;
    font-size: 26px;
    letter-spacing: 1px;
    line-height: 51px;
    text-align: center;
    padding-right: 14px;
}
```
